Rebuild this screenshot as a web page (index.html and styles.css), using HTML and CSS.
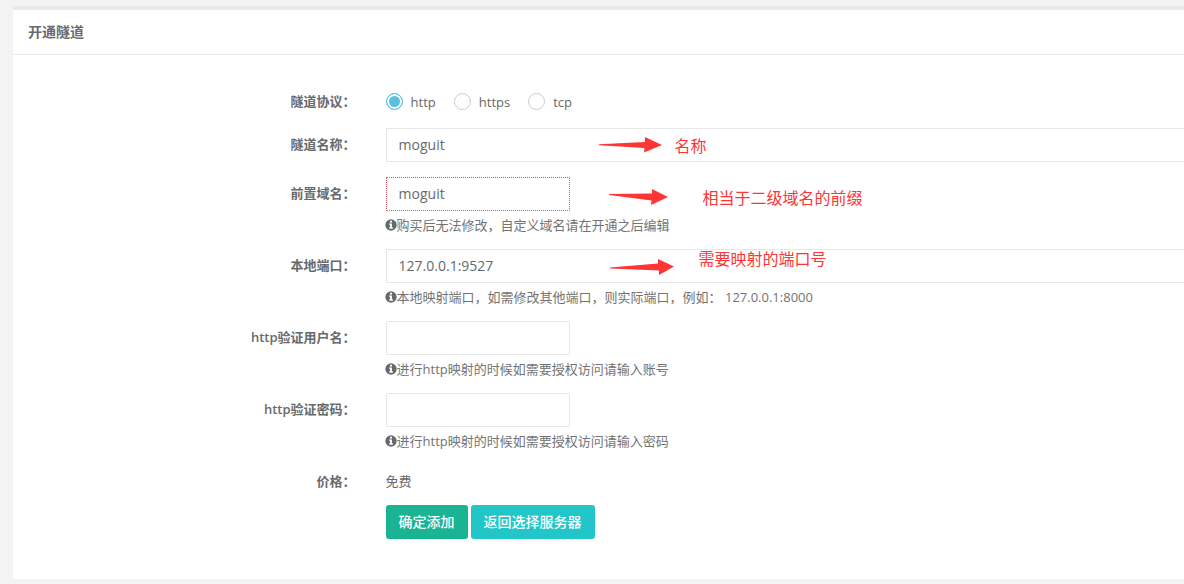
FILE: index.html
```html
<!DOCTYPE html>
<html lang="zh-CN">
<head>
<meta charset="utf-8">
<title>开通隧道</title>
<link rel="stylesheet" href="styles.css">
</head>
<body>
<svg class="sprite" aria-hidden="true">
  <symbol id="info" viewBox="0 0 12 12">
    <circle cx="6" cy="6" r="5.700" fill="currentColor"/>
    <path d="M4.900 1.800h2.100v1.600H4.900zM4.200 4.400H7v3.800h.9v1.500H4.200V8.200H5V5.800h-.8z" fill="#fff"/>
  </symbol>
</svg>
<main class="panel">
  <header class="panel-title"><h5>开通隧道</h5></header>
  <form class="panel-body">
    <div class="row">
      <span class="label" id="protocol">隧道协议：</span>
      <div class="field radios" role="radiogroup" aria-labelledby="protocol">
        <label class="radio"><input type="radio" name="protocol" checked>http</label>
        <label class="radio"><input type="radio" name="protocol">https</label>
        <label class="radio"><input type="radio" name="protocol">tcp</label>
      </div>
    </div>
    <div class="row">
      <label class="label" for="name">隧道名称：</label>
      <div class="field">
        <input class="input wide" id="name" type="text" value="moguit">
        <svg class="arrow arrow-name" viewBox="0 0 64 16"><path d="M0 7.200 46 5V0l17 8-18 7.500.5-4.500L0 8.200z"/></svg>
        <span class="note note-name">名称</span>
      </div>
    </div>
    <div class="row">
      <label class="label" for="domain">前置域名：</label>
      <div class="field">
        <input class="input short invalid" id="domain" type="text" value="moguit">
        <p class="help"><svg class="info"><use href="#info"/></svg>购买后无法修改，自定义域名请在开通之后编辑</p>
        <svg class="arrow arrow-domain" viewBox="0 0 60 16"><path d="M0 5 43 4.500V0l16 8-17 8 .5-4.500L0 6z"/></svg>
        <span class="note note-domain">相当于二级域名的前缀</span>
      </div>
    </div>
    <div class="row">
      <label class="label" for="port">本地端口：</label>
      <div class="field">
        <input class="input wide" id="port" type="text" value="127.0.0.1:9527">
        <p class="help"><svg class="info"><use href="#info"/></svg>本地映射端口，如需修改其他端口，则实际端口，例如： 127.0.0.1:8000</p>
        <svg class="arrow arrow-port" viewBox="0 0 66 16"><path d="M0 8.500 48 4.500V0l16 7.500L49 16v-4.500L0 9.500z"/></svg>
        <span class="note note-port">需要映射的端口号</span>
      </div>
    </div>
    <div class="row">
      <label class="label" for="user">http验证用户名：</label>
      <div class="field">
        <input class="input short" id="user" type="text">
        <p class="help"><svg class="info"><use href="#info"/></svg>进行http映射的时候如需要授权访问请输入账号</p>
      </div>
    </div>
    <div class="row">
      <label class="label" for="pass">http验证密码：</label>
      <div class="field">
        <input class="input short" id="pass" type="text">
        <p class="help"><svg class="info"><use href="#info"/></svg>进行http映射的时候如需要授权访问请输入密码</p>
      </div>
    </div>
    <div class="row">
      <span class="label">价格：</span>
      <div class="field static">免费</div>
    </div>
    <div class="row">
      <span class="label"></span>
      <div class="field actions">
        <button class="btn primary" type="button">确定添加</button>
        <button class="btn info-btn" type="button">返回选择服务器</button>
      </div>
    </div>
  </form>
</main>
</body>
</html>
```
FILE: styles.css
```css
* { box-sizing: border-box; }
body {
  margin: 0;
  padding: 6px 0 5px 13px;
  background: #f3f3f4;
  color: #676a6c;
  font: 13px/18px "Open Sans", "Noto Sans CJK SC", sans-serif;
  overflow-x: hidden;
}
.sprite { position: absolute; width: 0; height: 0; }
.panel { background: #fff; border-top: 4px solid #e7eaec; }
.panel-title { padding: 13px 15px; border-bottom: 1px solid #e7eaec; }
.panel-title h5 { margin: 0; font-size: 14px; line-height: 18px; font-weight: 600; }
.panel-body { padding: 30px 0 40px; }
.row { display: grid; grid-template-columns: calc(29% + 3px) 1fr; column-gap: 30px; margin-bottom: 15px; }
.row:last-child { margin-bottom: 0; }
.label { padding-top: 7px; text-align: right; font-weight: 600; }
.field { position: relative; min-width: 0; }
.radios { display: flex; gap: 18px; padding-top: 8px; height: 28px; }
.radio { display: flex; align-items: flex-start; gap: 8px; height: 18px; }
.radio input {
  appearance: none;
  width: 17px;
  height: 17px;
  margin: 0;
  border: 1px solid #ccc;
  border-radius: 50%;
  background: #fff;
}
.radio input:checked { border-color: #5bc0de; background: #5bc0de; box-shadow: inset 0 0 0 2px #fff; }
.input {
  display: block;
  height: 34px;
  padding: 5px 12px 7px;
  border: 1px solid #e5e6e7;
  border-radius: 1px;
  background: #fff;
  color: inherit;
  font: 14px/20px "Open Sans", "Noto Sans CJK SC", sans-serif;
}
.wide { width: 100%; border-right: 0; }
.short { width: 184px; }
.invalid { border: 1px dotted #cc5965; }
.help { display: flex; align-items: center; margin: 5px 0 0; color: #737373; white-space: pre; }
.info { width: 12px; height: 12px; flex: none; margin-left: -1px; color: #676a6c; }
.static { padding-top: 7px; }
.actions { display: flex; gap: 3px; }
.btn {
  height: 34px;
  padding: 0 13px;
  border: 0;
  border-radius: 3px;
  color: #fff;
  font: 500 14px/20px "Open Sans", "Noto Sans CJK SC", sans-serif;
}
.primary { background: #1ab394; }
.info-btn { background: #23c6c8; }

/* Red callouts drawn over the form */
.arrow { position: absolute; height: 16px; fill: #fd3535; }
.arrow-name { left: 213px; top: 9px; width: 64px; }
.arrow-domain { left: 223px; top: 12px; width: 60px; }
.arrow-port { left: 224px; top: 10px; width: 66px; }
.note {
  position: absolute;
  color: #fd3535;
  font: 16px/20px "Noto Sans CJK SC", sans-serif;
  white-space: nowrap;
}
.note-name { left: 289px; top: 7px; }
.note-domain { left: 317px; top: 10px; }
.note-port { left: 313px; top: -1px; }
```
